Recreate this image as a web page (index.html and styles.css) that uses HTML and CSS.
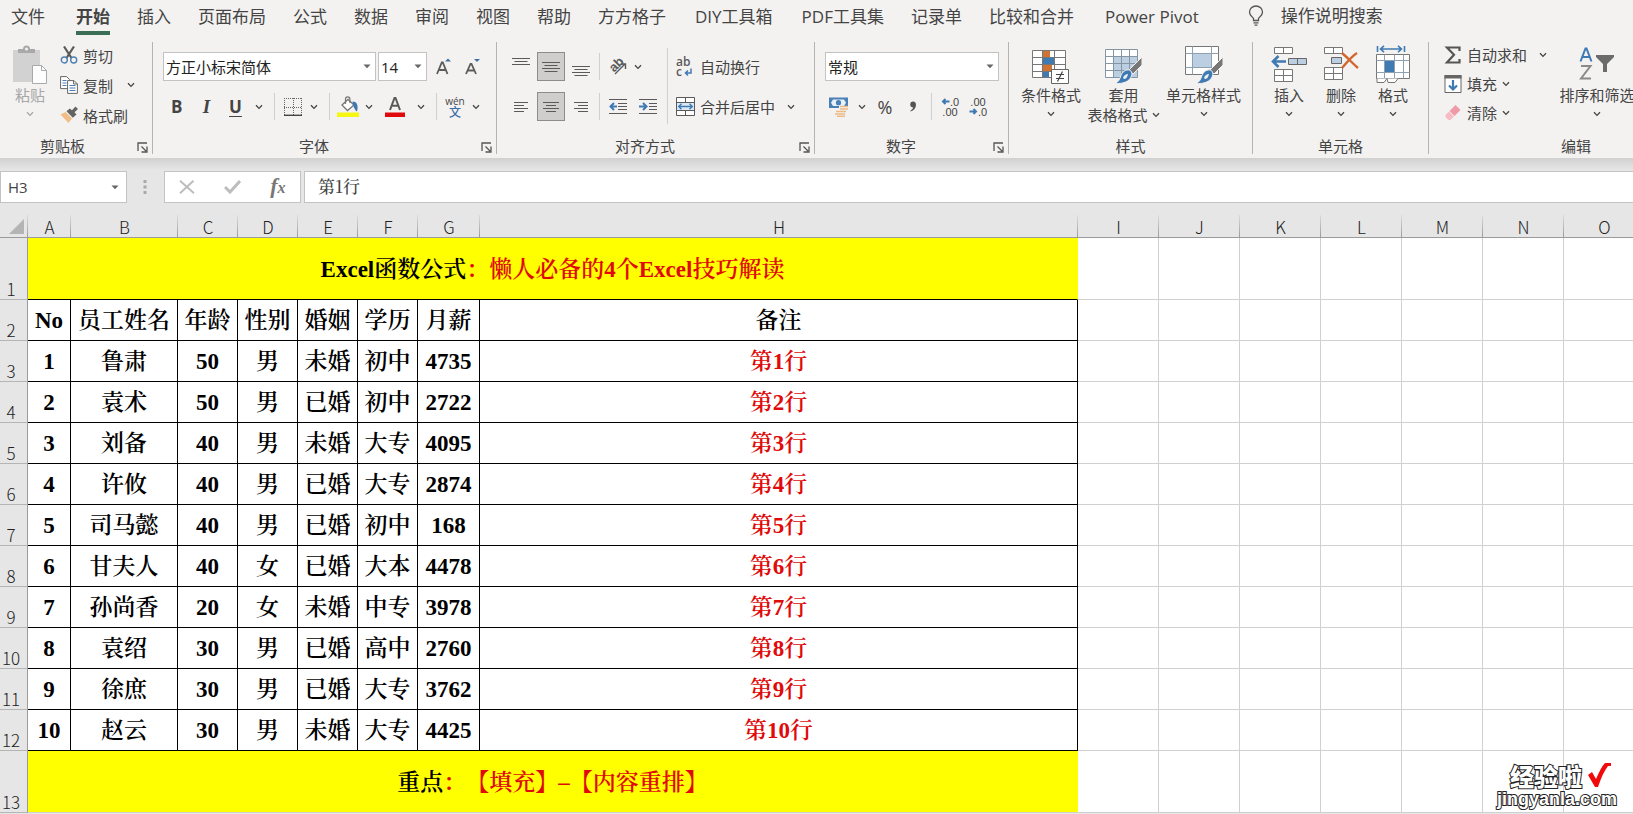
FILE: index.html
```html
<!DOCTYPE html>
<html lang="zh-CN">
<head>
<meta charset="utf-8">
<title>Excel</title>
<link rel="stylesheet" href="styles.css">
</head>
<body>
<svg class="defs" aria-hidden="true">
  <symbol id="chev" viewBox="0 0 8 6"><path d="M1 1.2 4 4.4 7 1.2" fill="none" stroke="currentColor" stroke-width="1.3"/></symbol>
  <symbol id="caret" viewBox="0 0 8 5"><path d="M0.5 0.5h7L4 4.2z" fill="#666"/></symbol>
  <symbol id="launch" viewBox="0 0 11 11"><path d="M1 9V1h9M4.5 4.5 9 9M10 4.5V10H4.5" fill="none" stroke="#555" stroke-width="1.3"/></symbol>
</svg>
<div class="app">
  <nav class="tabs">
    <button class="tab tab-file">文件</button>
    <button class="tab active">开始</button>
    <button class="tab">插入</button>
    <button class="tab">页面布局</button>
    <button class="tab">公式</button>
    <button class="tab">数据</button>
    <button class="tab">审阅</button>
    <button class="tab">视图</button>
    <button class="tab">帮助</button>
    <button class="tab">方方格子</button>
    <button class="tab addin">DIY工具箱</button>
    <button class="tab addin">PDF工具集</button>
    <button class="tab">记录单</button>
    <button class="tab">比较和合并</button>
    <button class="tab pivot">Power Pivot</button>
    <button class="tab tell">
      <svg width="16" height="22" viewBox="0 0 16 22"><path d="M5.5 15.5v-2.2C3.5 11.5 1.5 9.8 1.5 7a6.5 6 0 0 1 13 0c0 2.8-2 4.5-4 6.3v2.2zM5.5 17.8h5M6.5 20.2h3" fill="none" stroke="#555" stroke-width="1.3"/></svg>
      操作说明搜索</button>
  </nav>

  <div class="ribbon">
    <section class="group g-clip">
      <div class="body">
        <button class="big paste">
          <svg width="36" height="40" viewBox="0 0 36 40"><path d="M1 5h27v32H1z" fill="#d2d2d2"/><path d="M6 8V4h5a3.5 3.5 0 0 1 7 0h5v4z" fill="#a9a9a9"/><circle cx="14.5" cy="4" r="1.5" fill="#f3f2f1"/><path d="M20.5 20.5h9l5 5v13h-14z" fill="#fdfdfd" stroke="#a9a9a9"/><path d="M29.5 20.5v5h5" fill="none" stroke="#a9a9a9"/></svg>
          <span>粘贴</span><svg class="chev"><use href="#chev"/></svg>
        </button>
        <div class="stack stack-clip">
          <button class="item"><svg class="ico" width="18" height="18" viewBox="0 0 18 18"><path d="M4 0.5 11.5 12M14 0.5 6.5 12" stroke="#5a5a5a" stroke-width="2.2" fill="none"/><circle cx="4.3" cy="14" r="3" fill="none" stroke="#4f81b0" stroke-width="1.4"/><circle cx="13.7" cy="14" r="3" fill="none" stroke="#4f81b0" stroke-width="1.4"/></svg>剪切</button>
          <button class="item"><svg class="ico" width="18" height="18" viewBox="0 0 18 18"><path d="M0.6 0.6h6l3 3v9h-9z" fill="#fff" stroke="#666"/><path d="M2.5 4.5h4M2.5 7h4M2.5 9.5h4" stroke="#4a7fb5"/><path d="M7.6 4.6h6.4l3.4 3.4v9.4H7.6z" fill="#fff" stroke="#666"/><path d="M13.6 4.6V8h3.8" fill="none" stroke="#666"/><path d="M9.5 9.5h6M9.5 12h6M9.5 14.5h6" stroke="#4a7fb5"/></svg>复制<svg class="chev far"><use href="#chev"/></svg></button>
          <button class="item"><svg class="ico" width="18" height="18" viewBox="0 0 18 18"><path d="M15.5 0.5 18 3l-3.5 3.3 2 2.2-3.7 3.2-6.3-6.5L9.8 2.5l2.2 1.8z" fill="#636363"/><path d="M5.5 6 12 12.5 8.5 17 0.5 8.5z" fill="#f2bc86"/></svg>格式刷</button>
        </div>
      </div>
      <div class="foot"><span>剪贴板</span><button class="launch" aria-label="剪贴板设置"><svg width="11" height="11"><use href="#launch"/></svg></button></div>
    </section>

    <section class="group g-font">
      <div class="body rows">
        <div class="row">
          <div class="combo w-font"><select aria-label="字体"><option>方正小标宋简体</option></select><svg class="caret"><use href="#caret"/></svg></div>
          <div class="combo w-size"><select aria-label="字号"><option>14</option></select><svg class="caret"><use href="#caret"/></svg></div>
          <button class="btn grow" aria-label="增大字号"><svg width="16" height="18" viewBox="0 0 16 18"><path d="M1 16 5.8 4.5h1L11.5 16M3 12h6.5" fill="none" stroke="#5c5c5c" stroke-width="1.8"/><path d="M9 3.5h6L12 0.5z" fill="#3f6f9f"/></svg></button>
          <button class="btn" aria-label="减小字号"><svg width="16" height="18" viewBox="0 0 16 18"><path d="M1 16 5.5 6h1L11 16M3 12.5h6" fill="none" stroke="#5c5c5c" stroke-width="1.8"/><path d="M9 1h6l-3 3z" fill="#3f6f9f"/></svg></button>
        </div>
        <div class="row">
          <button class="btn b">B</button><button class="btn i">I</button><button class="btn u">U</button><button class="drop" aria-label="下划线选项"><svg class="chev"><use href="#chev"/></svg></button>
          <i class="sep"></i>
          <button class="btn" aria-label="边框"><svg width="18" height="18" viewBox="0 0 18 18"><path d="M0 .5h18M0.5 0v17M17.5 0v17M9.5 0v17M0 9.5h18" fill="none" stroke="#666" stroke-dasharray="1 1"/><path d="M0 17.3h18" stroke="#444" stroke-width="1.4"/></svg></button><button class="drop" aria-label="边框选项"><svg class="chev"><use href="#chev"/></svg></button>
          <i class="sep"></i>
          <button class="btn" aria-label="填充颜色"><svg width="22" height="22" viewBox="0 0 22 22"><path d="M5 9 11 3.5l6 5.5-6.5 5.5z" fill="#fff" stroke="#777" stroke-width="1.3"/><path d="M8.5 8V3a2.2 2.2 0 0 1 4.4 0v4" fill="none" stroke="#777" stroke-width="1.2"/><path d="M15.5 5.5c5 0 6 5 4.5 10-2-1-3-4-4-6.5z" fill="#3f78b0"/><path d="M0 16.5h22V21H0z" fill="#f6f613"/></svg></button><button class="drop" aria-label="填充颜色选项"><svg class="chev"><use href="#chev"/></svg></button>
          <button class="btn wide" aria-label="字体颜色"><svg width="20" height="22" viewBox="0 0 20 22"><path d="M5 14 9.5 2h1L15 14M6.8 9.8h6.5" fill="none" stroke="#595959" stroke-width="2"/><path d="M0 16.5h20V21H0z" fill="#e0090b"/></svg></button><button class="drop" aria-label="字体颜色选项"><svg class="chev"><use href="#chev"/></svg></button>
          <i class="sep"></i>
          <button class="btn pinyin"><span>wén</span><b>文</b></button><button class="drop" aria-label="拼音选项"><svg class="chev"><use href="#chev"/></svg></button>
        </div>
      </div>
      <div class="foot"><span>字体</span><button class="launch" aria-label="字体设置"><svg width="11" height="11"><use href="#launch"/></svg></button></div>
    </section>

    <section class="group g-align">
      <div class="body">
        <div class="rows">
          <div class="row gap">
            <button class="btn" aria-label="顶端对齐"><svg width="18" height="20" viewBox="0 0 18 20"><path d="M0 1.5h18M2.5 4.5h13M0 7.5h18" stroke="#5a5a5a"/></svg></button>
            <button class="btn on" aria-label="垂直居中"><svg width="18" height="20" viewBox="0 0 18 20"><path d="M0 5.5h18M2.5 8.5h13M0 11.5h18M2.5 14.5h13" stroke="#5a5a5a"/></svg></button>
            <button class="btn" aria-label="底端对齐"><svg width="18" height="20" viewBox="0 0 18 20"><path d="M0 9.5h18M2.5 12.5h13M0 15.5h18M2.5 18.5h13" stroke="#5a5a5a"/></svg></button>
            <i class="sep tight"></i>
            <button class="btn" aria-label="方向"><svg width="22" height="22" viewBox="0 0 22 22"><text x="2" y="13" font-size="13" transform="rotate(-45 9 9)" class="glyph">ab</text><path d="M8 18 18 8M13.5 8H18.5V13" fill="none" stroke="#5a5a5a" stroke-width="1.4"/></svg></button><button class="drop slim" aria-label="方向选项"><svg class="chev"><use href="#chev"/></svg></button>
          </div>
          <div class="row gap">
            <button class="btn" aria-label="左对齐"><svg width="14" height="14" viewBox="0 0 14 14"><path d="M0 2.5h14M0 5.5h10M0 8.5h14M0 11.5h10" stroke="#5a5a5a"/></svg></button>
            <button class="btn on" aria-label="居中"><svg width="16" height="14" viewBox="0 0 16 14"><path d="M0 2.5h16M3 5.5h10M0 8.5h16M3 11.5h10" stroke="#5a5a5a"/></svg></button>
            <button class="btn" aria-label="右对齐"><svg width="14" height="14" viewBox="0 0 14 14"><path d="M0 2.5h14M4 5.5h10M0 8.5h14M4 11.5h10" stroke="#5a5a5a"/></svg></button>
            <i class="sep tight"></i>
            <button class="btn" aria-label="减少缩进"><svg width="18" height="17" viewBox="0 0 18 17"><path d="M0 1.5h18M9 5.5h9M9 8.5h9M9 11.5h9M0 15.5h18" stroke="#5a5a5a"/><path d="M8 8.5H1.5M5 5 1.5 8.5 5 12" fill="none" stroke="#3f7ab3" stroke-width="2"/></svg></button>
            <button class="btn" aria-label="增加缩进"><svg width="18" height="17" viewBox="0 0 18 17"><path d="M0 1.5h18M10 5.5h8M10 8.5h8M10 11.5h8M0 15.5h18" stroke="#5a5a5a"/><path d="M0 8.5H7M4 5l3.5 3.5L4 12" fill="none" stroke="#3f7ab3" stroke-width="2"/></svg></button>
          </div>
        </div>
        <i class="sep high"></i>
        <div class="rows">
          <div class="row">
            <button class="item"><span class="ico wrapico"><span>ab</span><span class="wrapline">c<svg width="8" height="8" viewBox="0 0 8 8"><path d="M7 .5V5H1.5M4 2.5 1.5 5 4 7.5" fill="none" stroke="#3f7ab3" stroke-width="1.5"/></svg></span></span>自动换行</button>
          </div>
          <div class="row">
            <button class="item"><svg class="ico" width="19" height="19" viewBox="0 0 19 19"><path d="M.5.5h18v18H.5z" fill="#fff" stroke="#5a5a5a"/><path d="M.5 5.5h18M.5 13.5h18M9.5 .5v5M9.5 13.5v5" stroke="#5a5a5a"/><path d="M1 6h17v7H1z" fill="#dce8f4"/><path d="M2.5 9.5h14M5.5 6.8 2.7 9.5l2.8 2.7M13.5 6.8l2.8 2.7-2.8 2.7" fill="none" stroke="#3f7ab3" stroke-width="1.4"/></svg>合并后居中</button><button class="drop after" aria-label="合并选项"><svg class="chev"><use href="#chev"/></svg></button>
          </div>
        </div>
      </div>
      <div class="foot"><span>对齐方式</span><button class="launch" aria-label="对齐设置"><svg width="11" height="11"><use href="#launch"/></svg></button></div>
    </section>

    <section class="group g-num">
      <div class="body rows">
        <div class="row">
          <div class="combo w-num"><select aria-label="数字格式"><option>常规</option></select><svg class="caret"><use href="#caret"/></svg></div>
        </div>
        <div class="row">
          <button class="btn" aria-label="会计数字格式"><svg width="20" height="20" viewBox="0 0 20 20"><path d="M0 .5h19V11H0z" fill="#4a80b8"/><path d="M2 5.7 4 2.5h11l2 3.2-2 3.3H4z" fill="#e8f0f8"/><circle cx="9.5" cy="5.7" r="2.6" fill="#4a80b8"/><path d="M10 9h10v10H6v-5h4z" fill="#f3f2f1"/><path d="M11 9.5h8M11 12h8M7 14.5h10M6 17h10M8 19.4h8" stroke="#eebb85" stroke-width="1.7"/></svg></button><button class="drop" aria-label="会计格式选项"><svg class="chev"><use href="#chev"/></svg></button>
          <button class="btn pct">%</button><button class="btn" aria-label="千位分隔样式"><svg width="8" height="11" viewBox="0 0 8 11"><path d="M4 .5c2 0 3 1.3 3 3.2C7 7 5 9.5 1.5 10.5v-1C3.3 8.7 4 7.7 4 6.3 2.3 6.3 1.2 5 1.2 3.4 1.2 1.6 2.4.5 4 .5z" fill="#555"/></svg></button>
          <i class="sep tight"></i>
          <button class="btn dec" aria-label="增加小数位数"><span><svg width="9" height="7" viewBox="0 0 9 7"><path d="M8.5 3.5H2M4.5 1 2 3.5 4.5 6" fill="none" stroke="#3f7ab3" stroke-width="2"/></svg>.0</span><span>.00</span></button>
          <button class="btn dec" aria-label="减少小数位数"><span>.00</span><span><svg width="9" height="7" viewBox="0 0 9 7"><path d="M.5 3.5H7M4.5 1 7 3.5 4.5 6" fill="none" stroke="#3f7ab3" stroke-width="2"/></svg>.0</span></button>
        </div>
      </div>
      <div class="foot"><span>数字</span><button class="launch" aria-label="数字设置"><svg width="11" height="11"><use href="#launch"/></svg></button></div>
    </section>

    <section class="group g-style">
      <div class="body">
        <button class="big w-cond">
          <svg width="38" height="40" viewBox="0 0 38 40"><path d="M1 5.5h33v27H1z" fill="#fff"/><path d="M11 6h7v6.5h-7zM11 19h9v7h-9z" fill="#cf7232"/><path d="M11 12.5h11V19H11zM11 26h6v6.5h-6z" fill="#3f7ab3"/><path d="M.5 5.5h33v27H.5zM10.5 5.5v27M22.5 5.5v27M.5 12.5h33M.5 19.5h33M.5 26.5h33" fill="none" stroke="#777"/><path d="M19.5 24.5h17v14h-17z" fill="#fff" stroke="#666"/><path d="M24 29.5h8M24 33.5h8M30.5 26.5l-5 10" stroke="#444" stroke-width="1.2"/></svg>
          <span>条件格式</span><svg class="chev"><use href="#chev"/></svg>
        </button>
        <button class="big w-tbl">
          <svg width="38" height="40" viewBox="0 0 38 40"><path d="M.5 4.5h32v28H.5z" fill="#fff"/><path d="M9 12h24v20.500H9z" fill="#bccfe2"/><path d="M.5 4.5h32v28H.5zM8.5 4.5v28M16.5 4.5v28M24.5 4.5v28M.5 11.5h32M.5 18.5h32M.5 25.5h32" fill="none" stroke="#8695a3"/><path d="M37 12v8L28 29l-4-4z" fill="#777" stroke="#f3f2f1"/><path d="M22 25c3-1 6 2 4.5 6-2 6-9 8-17 7.5 4-1 5-4 6.5-8 1.5-4 4-5 6-5.5z" fill="#3f7ab3" stroke="#f3f2f1"/><path d="M18 33c1-3 3-4 5-4-.5 3-2 5-4 5z" fill="#e8eff6"/></svg>
          <span>套用</span><span class="line">表格格式<svg class="chev"><use href="#chev"/></svg></span>
        </button>
        <button class="big w-cell">
          <svg width="38" height="40" viewBox="0 0 38 40"><path d="M.5 1.5h33v28H.5z" fill="#fff" stroke="#777"/><path d="M7.5 1.5v28M26.5 1.5v28M.5 8.5h33M.5 22.5h33" stroke="#8fa0ae"/><path d="M8 9h18v13H8z" fill="#bccfe2"/><path d="M38 12v8L29 29l-4-4z" fill="#777" stroke="#f3f2f1"/><path d="M23 25c3-1 6 2 4.5 6-2 6-9 8-17 7.5 4-1 5-4 6.5-8 1.5-4 4-5 6-5.5z" fill="#3f7ab3" stroke="#f3f2f1"/><path d="M19 33c1-3 3-4 5-4-.5 3-2 5-4 5z" fill="#e8eff6"/></svg>
          <span>单元格样式</span><svg class="chev"><use href="#chev"/></svg>
        </button>
      </div>
      <div class="foot"><span>样式</span></div>
    </section>

    <section class="group g-cells">
      <div class="body">
        <button class="big">
          <svg width="36" height="40" viewBox="0 0 36 40"><path d="M3.5 2.5h18v6h-18zM12.5 2.5v6M3.5 24.5h18v12h-18zM12.5 24.5v12M3.5 30.5h18" fill="#fff" stroke="#777"/><path d="M17.5 13.5h18v6h-18z" fill="#bccfe2" stroke="#666"/><path d="M26.5 13.5v6" stroke="#666"/><path d="M15 16.5H2M7.5 11 2 16.5 7.5 22" fill="none" stroke="#3f7ab3" stroke-width="2.6"/></svg>
          <span>插入</span><svg class="chev"><use href="#chev"/></svg>
        </button>
        <button class="big">
          <svg width="36" height="40" viewBox="0 0 36 40"><path d="M1.5 2.5h18v6h-18zM10.5 2.5v6M1.5 22.5h18v12h-18zM10.5 22.5v12M1.5 28.5h18" fill="#fff" stroke="#777"/><path d="M8.5 12.5h10v6h-10z" fill="#bccfe2" stroke="#666"/><path d="M19 8c5 4 9 9 16 15M34 8c-5 3-10 9-15 15" fill="none" stroke="#d0672f" stroke-width="2.4"/></svg>
          <span>删除</span><svg class="chev"><use href="#chev"/></svg>
        </button>
        <button class="big">
          <svg width="36" height="40" viewBox="0 0 36 40"><path d="M2.5 1v6M29.5 1v6M5 4h22M9 .8 5.5 4 9 7.2M23 .8 26.5 4 23 7.2" fill="none" stroke="#3f7ab3" stroke-width="1.6"/><path d="M1.5 9.5h33v24h-33z" fill="#fff" stroke="#777"/><path d="M9.5 9.5v24M19.5 9.5v24M28.5 9.5v24M1.5 15.5h33M1.5 27.5h33" stroke="#8fa0ae"/><path d="M10 16h9v11h-9z" fill="#3f7ab3"/><path d="M2 33.5v4h7l3-4 1 4h7l3-4" fill="#fff" stroke="#777"/></svg>
          <span>格式</span><svg class="chev"><use href="#chev"/></svg>
        </button>
      </div>
      <div class="foot"><span>单元格</span></div>
    </section>

    <section class="group g-edit">
      <div class="body">
        <div class="stack stack-edit">
          <button class="item"><svg class="ico" width="16" height="18" viewBox="0 0 16 18"><path d="M14.5 5V1.5H2L9 8.700 2 16.5h12.500V13" fill="none" stroke="#555" stroke-width="2.2"/></svg>自动求和<svg class="chev sum"><use href="#chev"/></svg></button>
          <button class="item"><svg class="ico" width="17" height="18" viewBox="0 0 17 18"><path d="M.5.5h16v17H.5z" fill="#fff" stroke="#666"/><path d="M0 0h17v3.5H0z" fill="#666"/><path d="M8.5 5v9.5M4.5 10.5l4 4 4-4" fill="none" stroke="#3f7ab3" stroke-width="2.2"/></svg>填充<svg class="chev near"><use href="#chev"/></svg></button>
          <button class="item"><svg class="ico" width="17" height="17" viewBox="0 0 17 17"><path d="M11 1l5 5-6 6-5-5z" fill="#ef9aa8"/><path d="M4.5 7.5l5 5L6 16H4l-3-3v-2z" fill="#f6bcc4"/></svg>清除<svg class="chev near"><use href="#chev"/></svg></button>
        </div>
        <button class="big w-sort">
          <svg width="36" height="40" viewBox="0 0 36 40"><path d="M1.5 16.5 6.5 3.5h1l5 13M3.5 12h7" fill="none" stroke="#3f7ab3" stroke-width="2"/><path d="M2 21h9.5L2 33.500h10" fill="none" stroke="#8a8a8a" stroke-width="2"/><path d="M17 10h18v2l-7 7v8h-4v-8l-7-7z" fill="#6b6b6b"/></svg>
          <span>排序和筛选</span><svg class="chev"><use href="#chev"/></svg>
        </button>
      </div>
      <div class="foot"><span>编辑</span></div>
    </section>
  </div>

  <div class="formula">
    <div class="namebox"><input aria-label="名称框" value="H3"><svg class="caret"><use href="#caret"/></svg></div>
    <svg class="dots" width="4" height="14" viewBox="0 0 4 14"><path d="M.5 0h3v3h-3zM.5 5.5h3v3h-3zM.5 11h3v3h-3z" fill="#a8a8a8"/></svg>
    <div class="fxbox">
      <button aria-label="取消"><svg width="16" height="14" viewBox="0 0 16 14"><path d="M1 .8 15 13.2M14.5 .8 1 13.2" stroke="#bdbdbd" stroke-width="2"/></svg></button>
      <button aria-label="输入"><svg width="17" height="14" viewBox="0 0 17 14"><path d="M1 7l5 5L16 1" fill="none" stroke="#bdbdbd" stroke-width="3"/></svg></button>
      <button class="fx">f<small>x</small></button>
    </div>
    <input class="fxinput" aria-label="编辑栏" value="第1行">
  </div>

  <table class="sheet">
    <colgroup><col class="c-h"><col class="c-a"><col class="c-b"><col class="c-s"><col class="c-s"><col class="c-s"><col class="c-s"><col class="c-g"><col class="c-n"><col class="c-x"><col class="c-x"><col class="c-x"><col class="c-x"><col class="c-x"><col class="c-x"><col class="c-x"></colgroup>
    <thead><tr><th class="corner"><svg width="15" height="15" viewBox="0 0 15 15"><path d="M15 0v15H0z" fill="#b4b4b4"/></svg></th><th>A</th><th>B</th><th>C</th><th>D</th><th>E</th><th>F</th><th>G</th><th>H</th><th>I</th><th>J</th><th>K</th><th>L</th><th>M</th><th>N</th><th>O</th></tr></thead>
    <tbody>
      <tr class="high under"><th>1</th><td class="title" colspan="8">Excel函数公式<span class="red">：懒人必备的4个Excel技巧解读</span></td><td></td><td></td><td></td><td></td><td></td><td></td><td></td></tr>
      <tr class="data"><th>2</th><td>No</td><td>员工姓名</td><td>年龄</td><td>性别</td><td>婚姻</td><td>学历</td><td>月薪</td><td>备注</td><td></td><td></td><td></td><td></td><td></td><td></td><td></td></tr>
      <tr class="data"><th>3</th><td>1</td><td>鲁肃</td><td>50</td><td>男</td><td>未婚</td><td>初中</td><td>4735</td><td class="red">第1行</td><td></td><td></td><td></td><td></td><td></td><td></td><td></td></tr>
      <tr class="data"><th>4</th><td>2</td><td>袁术</td><td>50</td><td>男</td><td>已婚</td><td>初中</td><td>2722</td><td class="red">第2行</td><td></td><td></td><td></td><td></td><td></td><td></td><td></td></tr>
      <tr class="data"><th>5</th><td>3</td><td>刘备</td><td>40</td><td>男</td><td>未婚</td><td>大专</td><td>4095</td><td class="red">第3行</td><td></td><td></td><td></td><td></td><td></td><td></td><td></td></tr>
      <tr class="data"><th>6</th><td>4</td><td>许攸</td><td>40</td><td>男</td><td>已婚</td><td>大专</td><td>2874</td><td class="red">第4行</td><td></td><td></td><td></td><td></td><td></td><td></td><td></td></tr>
      <tr class="data"><th>7</th><td>5</td><td>司马懿</td><td>40</td><td>男</td><td>已婚</td><td>初中</td><td>168</td><td class="red">第5行</td><td></td><td></td><td></td><td></td><td></td><td></td><td></td></tr>
      <tr class="data"><th>8</th><td>6</td><td>甘夫人</td><td>40</td><td>女</td><td>已婚</td><td>大本</td><td>4478</td><td class="red">第6行</td><td></td><td></td><td></td><td></td><td></td><td></td><td></td></tr>
      <tr class="data"><th>9</th><td>7</td><td>孙尚香</td><td>20</td><td>女</td><td>未婚</td><td>中专</td><td>3978</td><td class="red">第7行</td><td></td><td></td><td></td><td></td><td></td><td></td><td></td></tr>
      <tr class="data"><th>10</th><td>8</td><td>袁绍</td><td>30</td><td>男</td><td>已婚</td><td>高中</td><td>2760</td><td class="red">第8行</td><td></td><td></td><td></td><td></td><td></td><td></td><td></td></tr>
      <tr class="data"><th>11</th><td>9</td><td>徐庶</td><td>30</td><td>男</td><td>已婚</td><td>大专</td><td>3762</td><td class="red">第9行</td><td></td><td></td><td></td><td></td><td></td><td></td><td></td></tr>
      <tr class="data"><th>12</th><td>10</td><td>赵云</td><td>30</td><td>男</td><td>未婚</td><td>大专</td><td>4425</td><td class="red">第10行</td><td></td><td></td><td></td><td></td><td></td><td></td><td></td></tr>
      <tr class="high"><th>13</th><td class="title" colspan="8">重点<span class="red">：【填充】–【内容重排】</span></td><td></td><td></td><td></td><td></td><td></td><td></td><td></td></tr>
    </tbody>
  </table>

  <div class="mark">
    <div class="mark-top"><span>经验啦</span><svg width="23" height="24" viewBox="0 0 23 24"><path d="M0 12l4-3 4 7C11 9 14 3 17 0h6v3h-3c-4 5-7 12-10 21H7z" fill="#f00a0a"/></svg></div>
    <div class="mark-url">jingyanla.com</div>
  </div>
</div>
</body>
</html>
```

FILE: styles.css
```css
* { box-sizing: border-box; }
body {
  margin: 0;
  font-family: "Open Sans", "Noto Sans CJK SC", sans-serif;
  font-size: 15px;
  color: #444;
}
button, input, select { font: inherit; color: inherit; }
button { background: none; border: 0; padding: 0; margin: 0; }
svg { flex: none; display: block; }
.defs { position: absolute; width: 0; height: 0; }
.app { position: relative; height: 100vh; overflow: hidden; background: #e6e6e6; }

/* tabs */
.tabs { display: flex; gap: 27px; height: 42px; padding-left: 11px; background: #f3f2f1; white-space: nowrap; font-size: 17px; }
.tab { flex: none; height: 35px; line-height: 33px; border-bottom: 4px solid transparent; }
.tab-file { margin-right: 4px; }
.tab.active { font-weight: 700; border-color: #3c6e55; }
.addin { margin-left: 2px; }
.pivot { margin-left: 4px; }
.tell { display: flex; align-items: center; gap: 17px; margin-left: 22px; }

/* ribbon */
.ribbon { display: flex; height: 116px; background: #f3f2f1; overflow: hidden; white-space: nowrap; }
.group { flex: none; display: flex; flex-direction: column; height: 112px; border-right: 1px solid #b4b4b4; }
.body { display: flex; flex: 1; }
.foot { display: flex; align-items: center; height: 15px; line-height: 15px; text-align: center; }
.foot span { flex: 1; }
.launch { width: 21px; display: grid; justify-content: end; padding: 2px 4px 0 0; }
.g-clip { width: 153px; }
.g-clip .body { padding-left: 6px; }
.g-clip .foot span { padding-right: 6px; }
.g-font { width: 344px; }
.g-font .body, .g-align .body, .g-num .body { padding-left: 10px; }
.g-align { width: 318px; }
.g-num { width: 194px; }
.g-style { width: 244px; }
.g-style .body { padding-left: 12px; gap: 5px; }
.g-cells { width: 176px; }
.g-cells .body { padding-left: 12px; gap: 4px; }
.g-edit { width: 294px; border: 0; }
.g-edit .body { padding-left: 12px; }

.rows { display: flex; flex-direction: column; gap: 11px; padding-top: 10px; }
.g-font .rows, .g-num .rows, .rows.body { justify-content: flex-start; }
.row { display: flex; align-items: center; height: 29px; }
.row.gap { gap: 2px; }
.row.gap .tight { margin: 0 2px; }
.row.gap .slim { margin-left: -2px; }
.sep { width: 1px; height: 27px; margin: 0 6px; background: #cfcfcf; }
.sep.tight { margin: 0 4px; }
.sep.high { height: 76px; margin: 6px 4px 0 5px; }
.btn { display: flex; align-items: center; justify-content: center; width: 28px; height: 29px; flex: none; }
.g-font .btn { width: 24px; }
.g-font .b, .g-font .i, .g-font .u { width: 29px; font-size: 17px; font-weight: 700; }
.g-font .b { justify-content: flex-start; padding-left: 8px; }
.g-font .i { font-family: "Liberation Serif", serif; font-style: italic; font-size: 19px; }
.u { text-decoration: underline; text-underline-offset: 3px; }
.g-font .wide { width: 34px; }
.g-font .grow { margin: 0 5px; }
.btn.on { background: #cfcecd; border: 1px solid #8c8c8c; }
.drop { width: 18px; height: 29px; display: grid; place-items: center; flex: none; }
.drop.slim { width: 12px; }
.drop.after { margin-left: 7px; }
.chev { width: 8px; height: 6px; }
.caret { width: 8px; height: 5px; }
.btn.pinyin { flex-direction: column; font-size: 10px; line-height: 10px; }
.pinyin b { font-family: "Noto Sans CJK SC", sans-serif; font-size: 12px; line-height: 12px; font-weight: 500; color: #3f6fa8; }
.pct { font-size: 18px; }
.dec { flex-direction: column; font: 11px/10px "Liberation Sans", sans-serif; }
.dec span { display: flex; align-items: center; }
.glyph { font-family: "Liberation Sans", sans-serif; font-weight: 700; fill: #5a5a5a; }
.wrapico { display: flex; flex-direction: column; font-size: 12px; line-height: 10px; font-weight: 600; color: #5a5a5a; text-align: left; }
.wrapline { display: flex; align-items: center; gap: 2px; }

.combo { display: grid; align-items: center; height: 29px; background: #fff; border: 1px solid #c3c3c3; }
.combo select { grid-area: 1 / 1; width: 100%; height: 27px; padding: 0 2px; border: 0; background: none; appearance: none; color: #222; }
.combo .caret { grid-area: 1 / 1; justify-self: end; margin-right: 4px; pointer-events: none; }
.w-font { width: 213px; margin-right: 2px; }
.w-size { width: 49px; }
.w-num { width: 174px; }

.big { display: flex; flex-direction: column; align-items: center; flex: none; width: 48px; height: 90px; padding-top: 3px; line-height: 20px; }
.big span { height: 20px; }
.big > .chev { margin-top: 6px; }
.line { display: flex; align-items: center; gap: 4px; }
.w-cond { width: 60px; }
.w-tbl, .w-cell { width: 75px; }
.w-sort { width: 76px; }
.paste { color: #a6a6a6; }
.stack { display: flex; flex-direction: column; }
.stack .item { height: 30px; }
.stack-clip { padding-left: 3px; }
.stack-edit { width: 118px; }
.stack-edit .item { height: 29px; }
.g-clip .stack, .g-edit .stack { margin-top: -2px; }
.item { display: flex; align-items: center; }
.ico { margin: 0 5px 0 3px; width: 18px; }
.rows .ico { width: 19px; margin: 0 5px 0 4px; }
.far { margin-left: 14px; }
.near { margin-left: 5px; }
.sum { margin-left: 12px; }

/* formula bar */
.formula { display: flex; height: 45px; padding: 13px 0 0; background: linear-gradient(#d0d0d0, #e6e6e6 12px); }
.formula > div, .fxinput { height: 32px; background: #fff; border: 1px solid #c3c3c3; }
.namebox { display: flex; align-items: center; width: 127px; padding: 0 7px; }
.namebox input { flex: 1; width: 50px; border: 0; padding: 0; background: none; }
.dots { margin: 9px 17px 0 16px; }
.fxbox { display: flex; align-items: center; justify-content: space-around; width: 137px; margin-right: 3px; }
.fx { font: italic 700 22px/26px "Liberation Serif", serif; color: #777; }
.fx small { font-size: 16px; }
.fxinput { flex: 1; min-width: 0; padding: 0 13px 4px; border-right: 0; font: 500 17px "Noto Serif CJK SC", "Noto Sans CJK SC", serif; }

/* sheet */
.sheet { width: 1645px; table-layout: fixed; border-collapse: separate; border-spacing: 0; background: #fff; }
.c-h { width: 28px; }
.c-a { width: 43px; }
.c-b { width: 107px; }
.c-s { width: 60px; }
.c-g { width: 62px; }
.c-n { width: 598px; }
.c-x { width: 81px; }
.sheet th { font: 300 17px/20px "Noto Sans CJK SC", sans-serif; color: #222; padding: 0; background: #e6e6e6; }
.sheet thead th { height: 35px; vertical-align: bottom; border-bottom: 1px solid #9b9b9b; background: linear-gradient(#dcdcdc, #9b9b9b) right bottom / 1px 22px no-repeat #e6e6e6; }
.corner svg { margin: 0 0 3px 9px; }
.sheet tbody th { vertical-align: bottom; padding-right: 5px; border-right: 1px solid #9b9b9b; border-bottom: 1px solid #b5b5b5; }
.sheet td {
  height: 41px;
  padding: 2px 0 0;
  border-right: 1px solid #d0d0d0;
  border-bottom: 1px solid #d0d0d0;
  font: 600 23px/28px "Liberation Serif", "Noto Serif CJK SC", "Noto Sans CJK SC", serif;
  text-spacing-trim: space-all;
  color: #000;
  text-align: center;
  white-space: nowrap;
}
.sheet .high td { height: 62px; }
.sheet .title { background: #ff0; border-right-color: #ff0; }
.sheet .under .title { border-bottom-color: #000; }
.data td:nth-child(-n+9) { border-color: #000; }
.sheet .red { color: #e00a0a; }

/* site mark */
.mark { position: absolute; right: 16px; bottom: 5px; color: #fff; }
.mark-top { display: flex; gap: 6px; justify-content: flex-end; padding-right: 6px; }
.mark-top span { font: 900 24px/26px "Noto Sans CJK SC", sans-serif; }
.mark-url { font: 700 18px/20px "Liberation Sans", sans-serif; }
.mark-top span, .mark-url { -webkit-text-stroke: 2px #222; paint-order: stroke fill; }
```
